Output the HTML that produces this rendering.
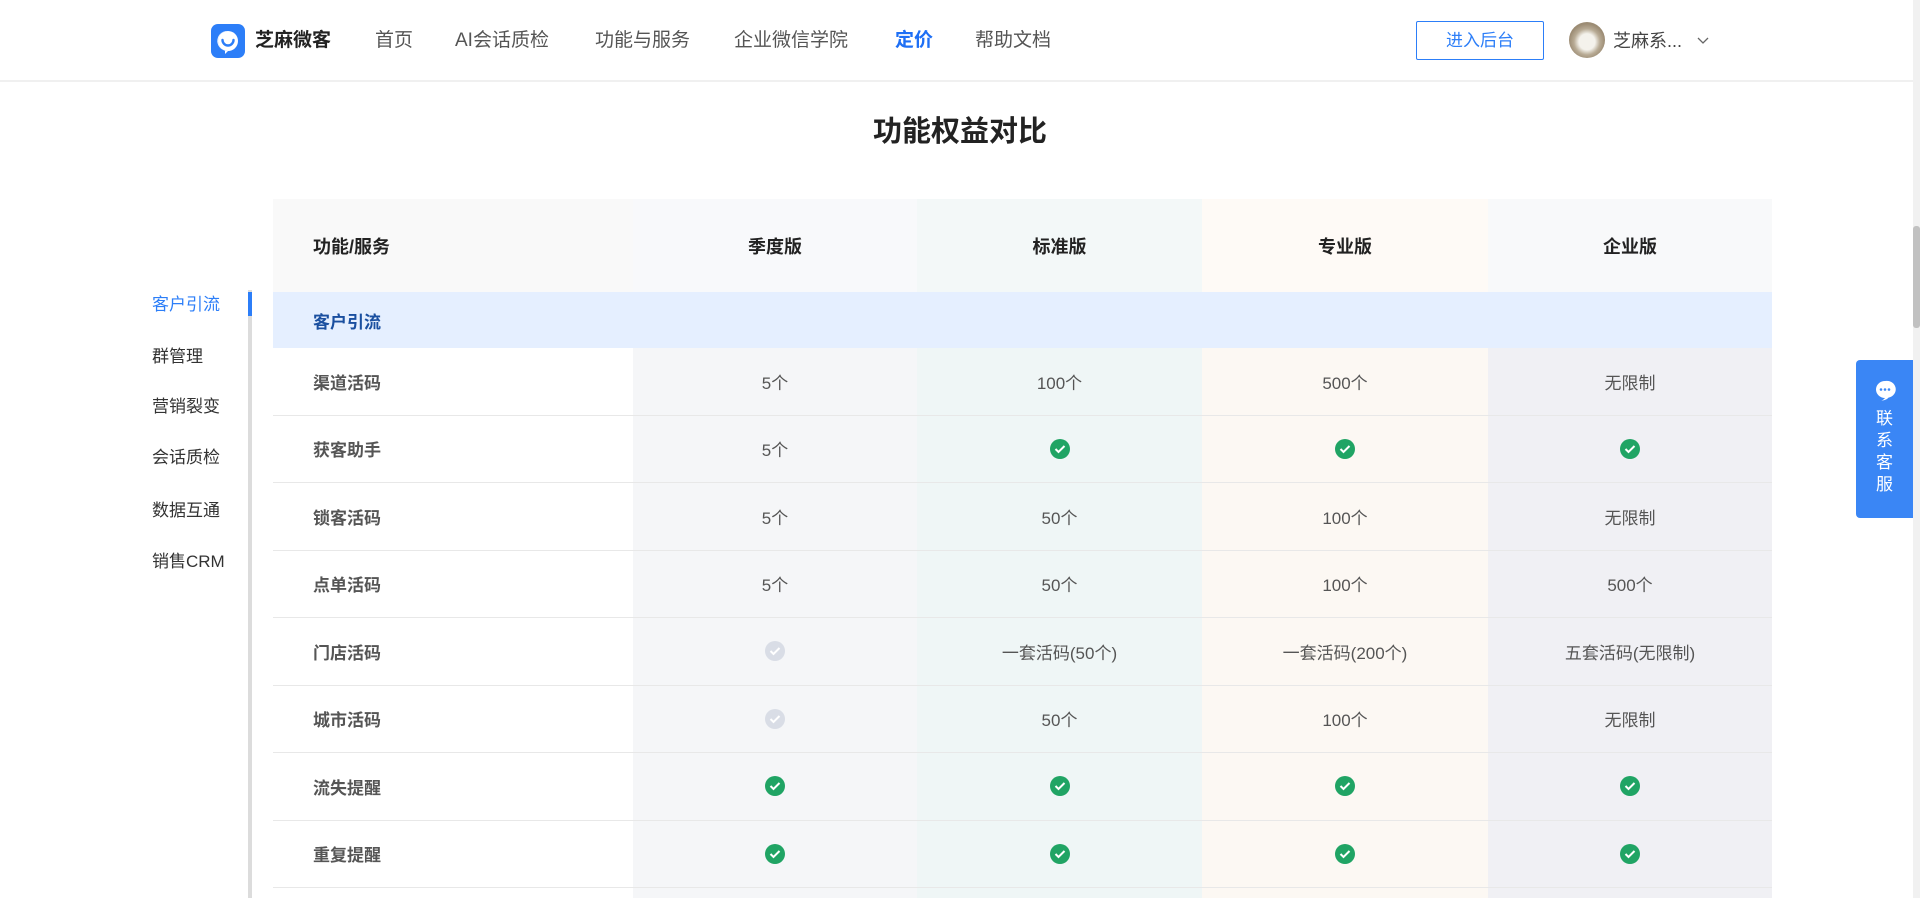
<!DOCTYPE html>
<html style="width:1920px;height:898px;overflow:hidden"><head><meta charset="utf-8"><style>
*{margin:0;padding:0;box-sizing:border-box}
body{width:1920px;height:898px;overflow:hidden;background:#fff;font-family:"Liberation Sans","Noto Sans CJK SC",sans-serif;position:relative;color:#333}
.hdr{position:absolute;left:0;top:0;width:1913px;height:82px;background:#fff;border-bottom:2px solid #f0f0f0}
.abs{position:absolute}
.nav{position:absolute;top:29px;font-size:19px;color:#555;line-height:24px;white-space:nowrap}
.tbl{position:absolute;left:273px;top:199px;width:1499px;height:699px;overflow:hidden}
.row{position:relative;height:67.5px;border-bottom:1px solid #e8e8e8;display:flex}
.c{display:flex;align-items:center;justify-content:center;font-size:17px;color:#555}
.c0{width:360px;justify-content:flex-start;padding-left:40px;font-weight:bold;background:#fff}
.c1{width:284px;background:#f5f6f8}
.c2{width:285px;background:#eff6f6}
.c3{width:286px;background:#fcf8f3}
.c4{width:284px;background:#f0f0f4}
.ok{width:20px;height:20px;border-radius:50%;background:#20a464;display:flex;align-items:center;justify-content:center}
.no{width:20px;height:20px;border-radius:50%;background:#d9dde6;display:flex;align-items:center;justify-content:center}
.side{position:absolute;left:152px;font-size:17px;color:#333;line-height:22px}
</style></head><body>
<div class="hdr"></div>
<div class="abs" style="left:211px;top:24px;width:34px;height:34px;border-radius:7px;background:#2c7ef8">
<svg width="34" height="34" viewBox="0 0 34 34"><path d="M17 7a10 10 0 1 0 0 20l-3 3v-3.3A10 10 0 0 1 17 7z" fill="#fff"/><circle cx="17" cy="17" r="10" fill="#fff"/><path d="M11.5 16a5.5 5.5 0 0 0 11 0" stroke="#2c7ef8" stroke-width="2.4" fill="none" stroke-linecap="round"/></svg></div>
<div class="nav" style="left:255px;font-weight:bold;color:#222">芝麻微客</div>
<div class="nav" style="left:375px">首页</div>
<div class="nav" style="left:455px">AI会话质检</div>
<div class="nav" style="left:595px">功能与服务</div>
<div class="nav" style="left:734px">企业微信学院</div>
<div class="nav" style="left:895px;color:#1e6ff5;font-weight:bold">定价</div>
<div class="nav" style="left:975px">帮助文档</div>
<div class="abs" style="left:1416px;top:21px;width:128px;height:39px;border:1px solid #2c7ef8;border-radius:2px;color:#2c7ef8;font-size:17px;text-align:center;line-height:37px">进入后台</div>
<div class="abs" style="left:1569px;top:22px;width:36px;height:36px;border-radius:50%;background:radial-gradient(circle at 50% 55%,#f4f2ec 0 8px,#b8ab95 13px,#9c8c74 18px)"></div>
<div class="nav" style="left:1613px;color:#444;font-size:18px">芝麻系...</div>
<div class="abs" style="left:1697px;top:33px"><svg width="12" height="10"><path d="M1 2l5 5 5-5" stroke="#666" stroke-width="1.3" fill="none"/></svg></div>
<div class="abs" style="left:0;width:1920px;top:114px;text-align:center;font-size:29px;font-weight:bold;color:#222;line-height:36px">功能权益对比</div>

<div class="abs" style="left:248px;top:290px;width:4px;height:608px;background:#dcdcdc"></div>
<div class="abs" style="left:248px;top:292px;width:4px;height:24px;background:#2c7ef8"></div>
<div class="side" style="top:294px;color:#2c7ef8">客户引流</div>
<div class="side" style="top:346px">群管理</div>
<div class="side" style="top:396px">营销裂变</div>
<div class="side" style="top:447px">会话质检</div>
<div class="side" style="top:500px">数据互通</div>
<div class="side" style="top:551px">销售CRM</div>

<div class="tbl">
<div class="row" style="height:93px;border:none">
<div class="c c0" style="background:#f9f9f9;color:#222;font-size:18px">功能/服务</div>
<div class="c c1" style="background:#f8f9fb;color:#222;font-weight:bold;font-size:18px">季度版</div>
<div class="c c2" style="background:#f3f8f8;color:#222;font-weight:bold;font-size:18px">标准版</div>
<div class="c c3" style="background:#fefaf6;color:#222;font-weight:bold;font-size:18px">专业版</div>
<div class="c c4" style="background:#f8f9fa;color:#222;font-weight:bold;font-size:18px">企业版</div>
</div>
<div class="row" style="height:56px;background:#e5efff;border:none"><div class="c" style="padding-left:40px;font-weight:bold;color:#1a4fa0">客户引流</div></div>
<div id="rows"></div>
</div>
<script>
var ok='<div class="ok"><svg width="12" height="10"><path d="M1.5 5l3 3 6-6" stroke="#fff" stroke-width="2" fill="none"/></svg></div>';
var no='<div class="no"><svg width="12" height="10"><path d="M1.5 5l3 3 6-6" stroke="#fff" stroke-width="2" fill="none"/></svg></div>';
var d=[["渠道活码","5个","100个","500个","无限制"],["获客助手","5个",ok,ok,ok],["锁客活码","5个","50个","100个","无限制"],["点单活码","5个","50个","100个","500个"],["门店活码",no,"一套活码(50个)","一套活码(200个)","五套活码(无限制)"],["城市活码",no,"50个","100个","无限制"],["流失提醒",ok,ok,ok,ok],["重复提醒",ok,ok,ok,ok],["","","","",""]];
var h="";d.forEach(function(r){h+='<div class="row">';r.forEach(function(v,i){h+='<div class="c c'+i+'">'+v+'</div>'});h+='</div>'});
document.getElementById("rows").innerHTML=h;
</script>
<div class="abs" style="left:1856px;top:360px;width:57px;height:158px;background:#3a86f5;border-radius:4px 0 0 4px;color:#fff;text-align:center">
<svg style="margin-top:19px" width="22" height="22" viewBox="0 0 22 22"><path d="M11 2a9 8.5 0 1 0 0 17c-1 1.5-3 2.5-4 2.5 3 0 6-1 7.5-2.9A8.5 8 0 0 0 11 2z" fill="#fff"/><circle cx="7" cy="10.5" r="1.3" fill="#3a86f5"/><circle cx="11" cy="10.5" r="1.3" fill="#3a86f5"/><circle cx="15" cy="10.5" r="1.3" fill="#3a86f5"/></svg>
<div style="font-size:17px;line-height:22px;margin-top:2px">联<br>系<br>客<br>服</div></div>
<div class="abs" style="left:1913px;top:0;width:7px;height:898px;background:#f1f1f1"></div>
<div class="abs" style="left:1913px;top:226px;width:7px;height:102px;background:#c1c1c1;border-radius:3px"></div>
</body></html>
